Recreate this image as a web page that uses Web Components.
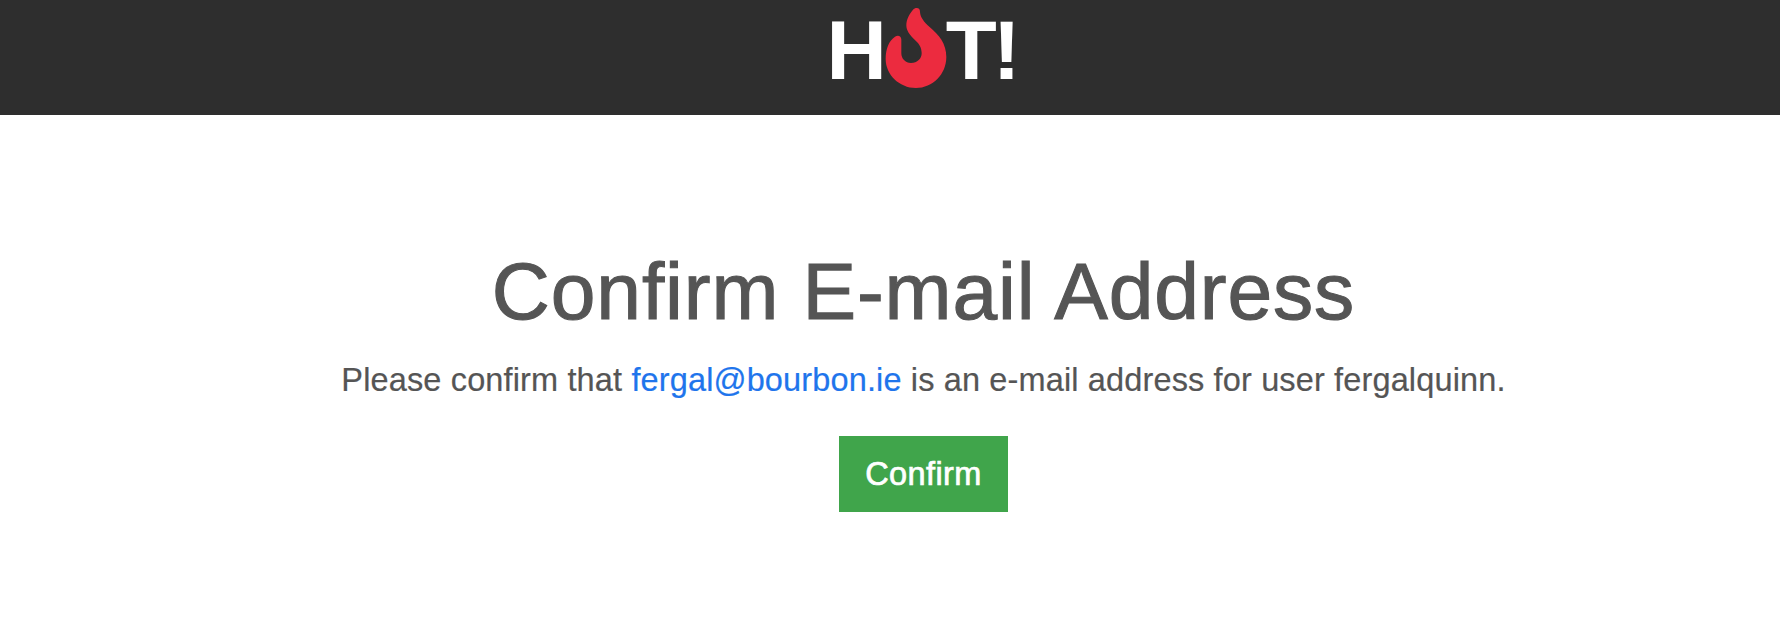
<!DOCTYPE html>
<html lang="en">
<head>
<meta charset="utf-8">
<title>Confirm E-mail Address</title>
<style>
html{overflow:hidden;background:#fff}
body{margin:0;width:1847px;height:620px;color:#555;font-family:"Liberation Sans",Arial,sans-serif;overflow:hidden}
</style>
</head>
<body>
<site-header></site-header>
<confirm-panel heading="Confirm E-mail Address">
Please confirm that <mail-link address="fergal@bourbon.ie"></mail-link> is an e-mail address for user fergalquinn.
<confirm-button slot="action">Confirm</confirm-button>
</confirm-panel>
<script>
const define = (name, html, setup) => customElements.define(name, class extends HTMLElement {
  constructor() {
    super();
    this.attachShadow({mode: "open"}).innerHTML = html;
  }
  connectedCallback() { if (setup) setup(this, this.shadowRoot); }
});
define("hot-logo", `<style>
:host{display:flex;align-items:flex-start;width:194px;color:#fff;font-weight:700;font-size:83.5px;line-height:98px;height:100px;white-space:nowrap}
svg{width:62px;height:84px;flex:none;margin:5px 0 0 -1.9px}
.end{letter-spacing:-4px;margin-left:-1.3px}
</style><span>H</span><svg viewBox="45 18 186 252" aria-hidden="true"><path fill="#ec2b3f" d="M140 24C147 24 150 28 150 36C151 52 162 66 178 80C208 105 229 131 229 171C229 223 188 264 138 264C87 264 47 223 47 177C47 146 57 122 75 110C84 104 94 108 94 119V160C94 176 106 189 123 189C142 189 155 176 155 160C155 143 148 132 137 122C118 104 109 92 109 76C109 58 118 42 129 29C132 26 136 24 140 24Z"/></svg><span class="end">T!</span>`);
define("site-header", `<style>
:host{display:flex;justify-content:center;height:115px;background:#2e2e2e;overflow:hidden}
hot-logo{margin-top:1px}
</style><hot-logo></hot-logo>`);
define("mail-link", `<style>
:host{display:inline}a{color:#1f75ec;text-decoration:none}
</style><a></a>`, (el, root) => {
  const a = root.querySelector("a");
  a.textContent = el.getAttribute("address");
  a.href = "mailto:" + a.textContent;
});
define("confirm-button", `<style>
:host{display:block}
button{display:block;box-sizing:border-box;width:169px;height:76px;border:0;padding:0;background:#40a54b;color:#fff;font:32.5px/76px "Liberation Sans",Arial,sans-serif;letter-spacing:.4px;-webkit-text-stroke:.7px #fff}
</style><button type="button"><slot></slot></button>`);
define("confirm-panel", `<style>
:host{display:flex;flex-direction:column;align-items:center;padding-top:126px}
h1{margin:0;font-weight:400;font-size:80.4px;line-height:100px;letter-spacing:.86px;-webkit-text-stroke:1.1px #555;white-space:nowrap}
p{margin:15px 0 32px;font-size:32.5px;line-height:48px;letter-spacing:.14px;-webkit-text-stroke:.2px;white-space:nowrap}
</style><h1></h1><p><slot></slot></p><slot name="action"></slot>`, (el, root) => {
  root.querySelector("h1").textContent = el.getAttribute("heading");
});
</script>
</body>
</html>
